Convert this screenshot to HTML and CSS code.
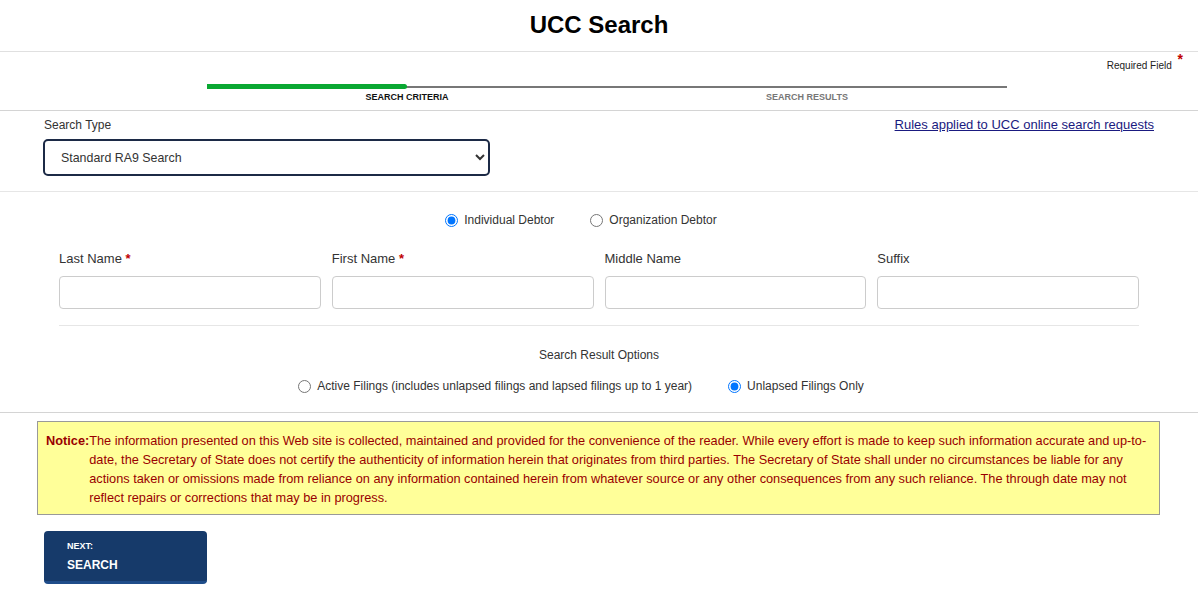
FILE: index.html
```html
<!DOCTYPE html>
<html lang="en">
<head>
    <meta charset="UTF-8">
    <meta name="viewport" content="width=device-width, initial-scale=1.0">
    <title>UCC Search</title>
    <link rel="stylesheet" href="styles.css">
</head>
<body>
    <header class="page-header">
        <h1>UCC Search</h1>
    </header>

    <div class="steps-section">
        <div class="required-note">Required Field <span class="req">*</span></div>
        <div class="steps">
            <div class="steps-track"><div class="steps-fill"></div></div>
            <div class="steps-labels">
                <span class="step active">SEARCH CRITERIA</span>
                <span class="step">SEARCH RESULTS</span>
            </div>
        </div>
    </div>

    <form class="search-form" onsubmit="return false">
        <div class="type-section">
            <div class="type-head">
                <label for="searchType" class="type-label">Search Type</label>
                <a href="#" class="rules-link">Rules applied to UCC online search requests</a>
            </div>
            <select id="searchType" class="type-select">
                <option>Standard RA9 Search</option>
            </select>
        </div>

        <div class="debtor-section">
            <div class="radio-row">
                <label class="radio"><input type="radio" name="debtor" checked> Individual Debtor</label>
                <label class="radio"><input type="radio" name="debtor"> Organization Debtor</label>
            </div>

            <div class="name-grid">
                <div class="field">
                    <label>Last Name <span class="req">*</span></label>
                    <input type="text" class="text-input">
                </div>
                <div class="field">
                    <label>First Name <span class="req">*</span></label>
                    <input type="text" class="text-input">
                </div>
                <div class="field">
                    <label>Middle Name</label>
                    <input type="text" class="text-input">
                </div>
                <div class="field">
                    <label>Suffix</label>
                    <input type="text" class="text-input">
                </div>
            </div>

            <div class="options">
                <div class="options-title">Search Result Options</div>
                <div class="radio-row options-row">
                    <label class="radio"><input type="radio" name="filings"> Active Filings (includes unlapsed filings and lapsed filings up to 1 year)</label>
                    <label class="radio"><input type="radio" name="filings" checked> Unlapsed Filings Only</label>
                </div>
            </div>
        </div>

        <div class="notice">
            <strong class="notice-label">Notice:</strong>
            <p class="notice-text">The information presented on this Web site is collected, maintained and provided for the convenience of the reader. While every effort is made to keep such information accurate and up-to-date, the Secretary of State does not certify the authenticity of information herein that originates from third parties. The Secretary of State shall under no circumstances be liable for any actions taken or omissions made from reliance on any information contained herein from whatever source or any other consequences from any such reliance. The through date may not reflect repairs or corrections that may be in progress.</p>
        </div>

        <button type="submit" class="next-btn">
            <span class="next-small">NEXT:</span>
            <span class="next-big">SEARCH</span>
        </button>
    </form>
</body>
</html>
```

FILE: styles.css
```css
body {
    margin: 0;
    background: #fff;
    color: #333;
    font-family: "Liberation Sans", Arial, sans-serif;
}

.page-header {
    border-bottom: 1px solid #e0e0e0;
    height: 51px;
    display: flex;
    align-items: center;
    justify-content: center;
}

.page-header h1 {
    margin: 0;
    font-size: 24px;
    color: #000;
    padding-bottom: 2px;
}

.req {
    color: #c00000;
    font-weight: bold;
}

.steps-section {
    position: relative;
    height: 58px;
    border-bottom: 1px solid #d4d4d4;
}

.required-note {
    position: absolute;
    top: 4px;
    right: 18px;
    font-size: 10px;
    color: #222;
}

.required-note .req {
    position: relative;
    top: -5px;
    left: 3px;
    font-size: 14px;
}

.steps {
    width: 800px;
    margin-left: 207px;
    padding-top: 34px;
}

.steps-track {
    height: 2px;
    background: #777;
    position: relative;
}

.steps-fill {
    position: absolute;
    left: 0;
    top: -2px;
    width: 200px;
    height: 5px;
    background: #0aa832;
    border-radius: 0 3px 3px 0;
}

.steps-labels {
    display: grid;
    grid-template-columns: 1fr 1fr;
    text-align: center;
    margin-top: 4px;
}

.step {
    font-size: 9px;
    font-weight: bold;
    color: #777;
}

.step.active {
    color: #111;
}

.type-section {
    padding: 6px 44px 15px 43px;
    border-bottom: 1px solid #e6e6e6;
}

.type-head {
    display: flex;
    justify-content: space-between;
    align-items: center;
}

.type-label {
    font-size: 12px;
    margin-left: 1px;
}

.rules-link {
    font-size: 13px;
    color: #1a1a80;
}

.type-select {
    margin-top: 7px;
    width: 447px;
    height: 37px;
    border: 2px solid #1c2a46;
    border-radius: 5px;
    padding: 0 12px;
    font-family: inherit;
    font-size: 12.4px;
    color: #333;
    background: #fff;
}

.debtor-section {
    padding: 21px 59px 19px;
    border-bottom: 1px solid #d4d4d4;
}

.radio-row {
    display: flex;
    justify-content: center;
    gap: 36px;
    padding-right: 36px;
}

.radio {
    font-size: 12px;
    display: flex;
    align-items: center;
    gap: 6px;
}

.radio input {
    margin: 0;
    width: 13px;
    height: 13px;
}

.name-grid {
    display: grid;
    grid-template-columns: repeat(4, 1fr);
    gap: 11px;
    margin-top: 24px;
    padding-bottom: 16px;
    border-bottom: 1px solid #e6e6e6;
}

.field label {
    display: block;
    font-size: 13px;
    margin-bottom: 10px;
}

.text-input {
    box-sizing: border-box;
    width: 100%;
    height: 33px;
    border: 1px solid #ccc;
    border-radius: 4px;
}

.options {
    text-align: center;
    margin-top: 22px;
}

.options-title {
    font-size: 12px;
}

.options-row {
    margin-top: 17px;
}

.notice {
    display: flex;
    margin: 8px 38px 0 37px;
    padding: 9px 7px 7px 8px;
    background: #ffff99;
    border: 1px solid #999;
    color: #990000;
    font-size: 12.75px;
    line-height: 19px;
}

.notice-label {
    flex-shrink: 0;
}

.notice-text {
    margin: 0;
}

.next-btn {
    display: flex;
    flex-direction: column;
    align-items: flex-start;
    margin: 16px 0 0 44px;
    width: 163px;
    height: 53px;
    padding: 10px 23px 0;
    background: #163a6a;
    border: none;
    border-bottom: 3px solid #1f4d8a;
    border-radius: 4px;
    color: #fff;
    font-family: inherit;
    font-weight: bold;
    cursor: pointer;
    box-sizing: border-box;
}

.next-small {
    font-size: 9px;
}

.next-big {
    font-size: 12px;
    margin-top: 7px;
}
```
